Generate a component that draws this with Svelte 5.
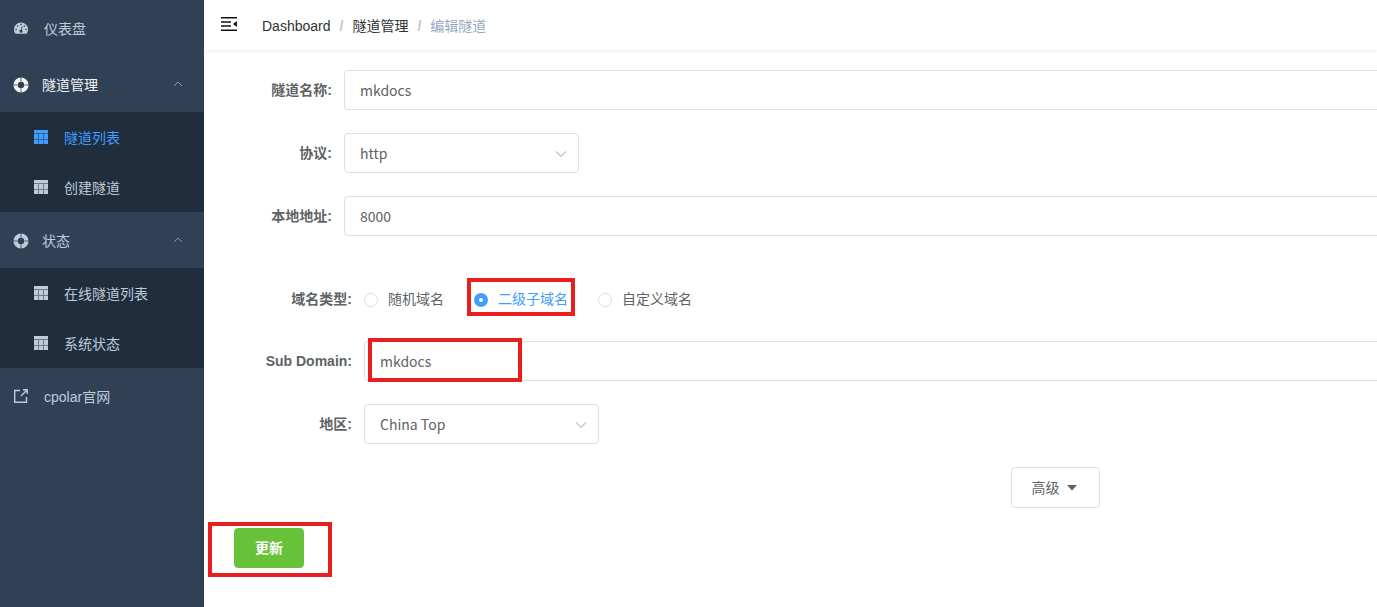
<script lang="ts">
	const menu = [
		{
			title: '隧道管理',
			active: true,
			children: [
				{ title: '隧道列表', active: true },
				{ title: '创建隧道', active: false }
			]
		},
		{
			title: '状态',
			active: false,
			children: [
				{ title: '在线隧道列表', active: false },
				{ title: '系统状态', active: false }
			]
		}
	];

	const domainTypes = [
		{ value: 'random', label: '随机域名' },
		{ value: 'sub', label: '二级子域名' },
		{ value: 'custom', label: '自定义域名' }
	];

	let name = $state('mkdocs');
	let protocol = $state('http');
	let address = $state('8000');
	let domainType = $state('sub');
	let subDomain = $state('mkdocs');
	let region = $state('cn_top');
</script>

{#snippet tableIcon()}
	<svg class="icon" viewBox="0 0 14 14" aria-hidden="true">
		<path d="M0 0h14v3H0zM0 4h4v5H0zM5 4h4v5H5zM10 4h4v5h-4zM0 10h4v4H0zM5 10h4v4H5zM10 10h4v4h-4z" fill="currentColor" />
		<path d="M0 3h14v1H0zM0 9h14v1H0zM4 4h1v10H4zM9 4h1v10H9z" fill="currentColor" opacity="0.5" />
	</svg>
{/snippet}

{#snippet chevron()}
	<svg class="chevron" viewBox="0 0 14 14" aria-hidden="true">
		<path d="M2 4.5l5 5 5-5" fill="none" stroke="currentColor" stroke-width="1.2" />
	</svg>
{/snippet}

<div class="app">
	<aside class="sidebar">
		<nav>
			<a class="item" href="#dashboard">
				<svg class="icon" viewBox="0 0 14 14" aria-hidden="true">
					<path
						fill="currentColor"
						fill-rule="evenodd"
						d="M7 1.4a7 7 0 0 0-7 7c0 1.3.3 2.6 1 3.9.2.3.5.5.8.5h10.4c.3 0 .6-.2.8-.5.7-1.3 1-2.6 1-3.9a7 7 0 0 0-7-7zM2.1 7.7a.8.8 0 1 1 0 1.6.8.8 0 0 1 0-1.6zM3.6 4.2a.8.8 0 1 1 0 1.6.8.8 0 0 1 0-1.6zM7 2.6a.8.8 0 1 1 0 1.6.8.8 0 0 1 0-1.6zM10.4 4.2a.8.8 0 1 1 0 1.6.8.8 0 0 1 0-1.6zM11.9 7.7a.8.8 0 1 1 0 1.6.8.8 0 0 1 0-1.6zM7.9 5l.8.2-.9 3.7a1.5 1.5 0 1 1-.8-.2z"
					/>
				</svg>
				<span>仪表盘</span>
			</a>
			{#each menu as group}
				<button class="item group" class:current={group.active} type="button">
					<svg class="ring" viewBox="0 0 16 16" aria-hidden="true">
						<circle cx="8" cy="8" r="5.4" fill="none" stroke="currentColor" stroke-width="4.4" />
						<path d="M8 0v4.6M8 11.4V16M0 8h4.6M11.4 8H16" stroke="#304156" stroke-width="0.8" />
					</svg>
					<span>{group.title}</span>
					<svg class="arrow" viewBox="0 0 12 12" aria-hidden="true">
						<path d="M2 8l4-4 4 4" fill="none" stroke="currentColor" />
					</svg>
				</button>
				<div class="submenu">
					{#each group.children as child}
						<a class="item sub" class:active={child.active} href="#tunnel">
							{@render tableIcon()}
							<span>{child.title}</span>
						</a>
					{/each}
				</div>
			{/each}
			<a class="item" href="#cpolar">
				<svg class="icon" viewBox="0 0 14 14" aria-hidden="true">
					<path d="M6 1.5H.7v11.8h11.8V8M9 .8h4.2V5M13 1L7 7" fill="none" stroke="currentColor" stroke-width="1.4" />
				</svg>
				<span>cpolar官网</span>
			</a>
		</nav>
	</aside>

	<main>
		<header class="navbar">
			<button class="fold" type="button" aria-label="菜单">
				<svg viewBox="0 0 16 14" aria-hidden="true">
					<path d="M0 .8h16M0 5h10M0 9h10M0 13.2h16" stroke="currentColor" stroke-width="1.5" />
					<path d="M16 4v6l-4-3z" fill="currentColor" />
				</svg>
			</button>
			<nav class="breadcrumb">
				<a href="#dashboard">Dashboard</a>
				<span class="sep">/</span>
				<a href="#manage">隧道管理</a>
				<span class="sep">/</span>
				<span class="last">编辑隧道</span>
			</nav>
		</header>

		<form onsubmit={(e) => e.preventDefault()}>
			<div class="row">
				<label class="label" for="name">隧道名称:</label>
				<input id="name" class="control" type="text" bind:value={name} />
			</div>
			<div class="row">
				<label class="label" for="protocol">协议:</label>
				<div class="select">
					<select id="protocol" class="control" bind:value={protocol}>
						<option value="http">http</option>
						<option value="tcp">tcp</option>
					</select>
					{@render chevron()}
				</div>
			</div>
			<div class="row">
				<label class="label" for="address">本地地址:</label>
				<input id="address" class="control" type="text" bind:value={address} />
			</div>

			<div class="domain">
				<div class="row radios" role="radiogroup" aria-labelledby="domain-type">
					<span class="label" id="domain-type">域名类型:</span>
					{#each domainTypes as type}
						<label class="radio" class:checked={domainType === type.value} class:marked={type.value === 'sub'}>
							<input type="radio" name="domain-type" value={type.value} bind:group={domainType} />
							<span>{type.label}</span>
						</label>
					{/each}
				</div>
				<div class="row">
					<label class="label" for="sub-domain">Sub Domain:</label>
					<div class="field marked">
						<input id="sub-domain" class="control" type="text" bind:value={subDomain} />
					</div>
				</div>
				<div class="row">
					<label class="label" for="region">地区:</label>
					<div class="select">
						<select id="region" class="control" bind:value={region}>
							<option value="cn_top">China Top</option>
							<option value="cn">China</option>
						</select>
						{@render chevron()}
					</div>
				</div>
			</div>

			<div class="more">
				<button class="btn" type="button">
					<span>高级</span>
					<svg viewBox="0 0 10 6" aria-hidden="true"><path d="M0 0h10L5 5.5z" fill="currentColor" /></svg>
				</button>
			</div>
			<div class="submit marked">
				<button class="btn success" type="submit">更新</button>
			</div>
		</form>
	</main>
</div>

<style>
	:global(body) {
		margin: 0;
		font-family: 'Liberation Sans', 'Noto Sans CJK SC', sans-serif;
		font-size: 14px;
		color: #606266;
		background: #fff;
	}
	.app {
		display: flex;
		min-height: 100vh;
	}
	.app *,
	.app *::after {
		box-sizing: border-box;
	}
	button,
	input,
	select {
		font: inherit;
		color: inherit;
	}
	.sidebar {
		flex: none;
		width: 204px;
		background: #304156;
		color: #bfcbd9;
	}
	.item {
		display: flex;
		align-items: center;
		gap: 16px;
		width: 100%;
		height: 56px;
		padding: 0 20px 0 14px;
		border: 0;
		background: none;
		color: inherit;
		text-decoration: none;
		text-align: left;
		cursor: pointer;
	}
	.icon {
		width: 14px;
		height: 14px;
	}
	.group {
		gap: 13px;
		padding-left: 13px;
	}
	.current {
		color: #f4f4f5;
	}
	.ring {
		width: 16px;
		height: 16px;
		margin-top: 2px;
	}
	.arrow {
		width: 12px;
		height: 12px;
		margin-left: auto;
		color: #909399;
	}
	.submenu {
		background: #1f2d3d;
	}
	.sub {
		height: 50px;
		padding-left: 34px;
	}
	.active {
		color: #409eff;
	}
	main {
		flex: 1;
		min-width: 0;
		overflow: hidden;
	}
	.navbar {
		display: flex;
		align-items: center;
		height: 50px;
		padding: 0 17px;
		box-shadow: 0 1px 4px rgba(0, 21, 41, 0.08);
	}
	.fold {
		display: flex;
		padding: 0;
		margin: 0 25px 2px 0;
		border: 0;
		background: none;
		color: #111;
	}
	.fold svg {
		width: 16px;
		height: 14px;
	}
	.breadcrumb {
		display: flex;
		align-items: baseline;
		gap: 9px;
		color: #303133;
	}
	.breadcrumb a {
		color: inherit;
		text-decoration: none;
	}
	.sep {
		color: #c0c4cc;
		font-weight: 700;
	}
	.last {
		color: #97a8be;
	}
	/* wide form: fields run past the right edge on small windows */
	form {
		min-width: 1702px;
		padding: 20px;
	}
	.row {
		display: flex;
		align-items: flex-start;
		height: 41px;
		margin-bottom: 22px;
	}
	.label {
		flex: none;
		width: 120px;
		padding-right: 12px;
		line-height: 40px;
		font-weight: 700;
		text-align: right;
	}
	.control {
		display: block;
		width: 100%;
		height: 40px;
		padding: 0 15px;
		border: 1px solid #dcdfe6;
		border-radius: 4px;
		outline: 0;
		background: #fff;
		font-family: 'Noto Sans CJK SC', sans-serif;
		appearance: none;
	}
	.select {
		position: relative;
		width: 235px;
	}
	.chevron {
		position: absolute;
		top: 14px;
		right: 11px;
		width: 14px;
		height: 14px;
		color: #c0c4cc;
		pointer-events: none;
	}
	.domain {
		padding: 20px 0 0 20px;
	}
	.radios {
		height: 40px;
	}
	.radio {
		display: flex;
		align-items: center;
		gap: 10px;
		height: 38px;
		margin-right: 30px;
	}
	.radio input {
		width: 14px;
		height: 14px;
		margin: 4px 0 0;
		border: 1px solid #dcdfe6;
		border-radius: 50%;
		background: #fff;
		appearance: none;
	}
	.radio input:checked {
		border: 5px solid #409eff;
	}
	.checked {
		color: #409eff;
	}
	.field {
		flex: 1;
	}
	.marked {
		position: relative;
	}
	.marked::after {
		content: '';
		position: absolute;
		border: 4px solid #e91e1e;
		pointer-events: none;
	}
	.radio.marked::after {
		inset: -1px -7px 1px;
	}
	.field.marked::after {
		top: -3px;
		left: 4px;
		width: 154px;
		height: 44px;
	}
	.submit.marked::after {
		top: -6px;
		left: -16px;
		width: 124px;
		height: 55px;
	}
	.more {
		display: flex;
		justify-content: center;
		margin-bottom: 20px;
	}
	.btn {
		display: flex;
		align-items: center;
		gap: 7px;
		height: 41px;
		padding: 0 20px;
		border: 1px solid #dcdfe6;
		border-radius: 4px;
		background: #fff;
		line-height: 20px;
		cursor: pointer;
	}
	.btn svg {
		width: 10px;
		height: 6px;
		margin-right: 2px;
	}
	.submit {
		padding-left: 10px;
	}
	.success {
		height: 40px;
		border-color: #67c23a;
		background: #67c23a;
		color: #fff;
		font-weight: 700;
	}
</style>
